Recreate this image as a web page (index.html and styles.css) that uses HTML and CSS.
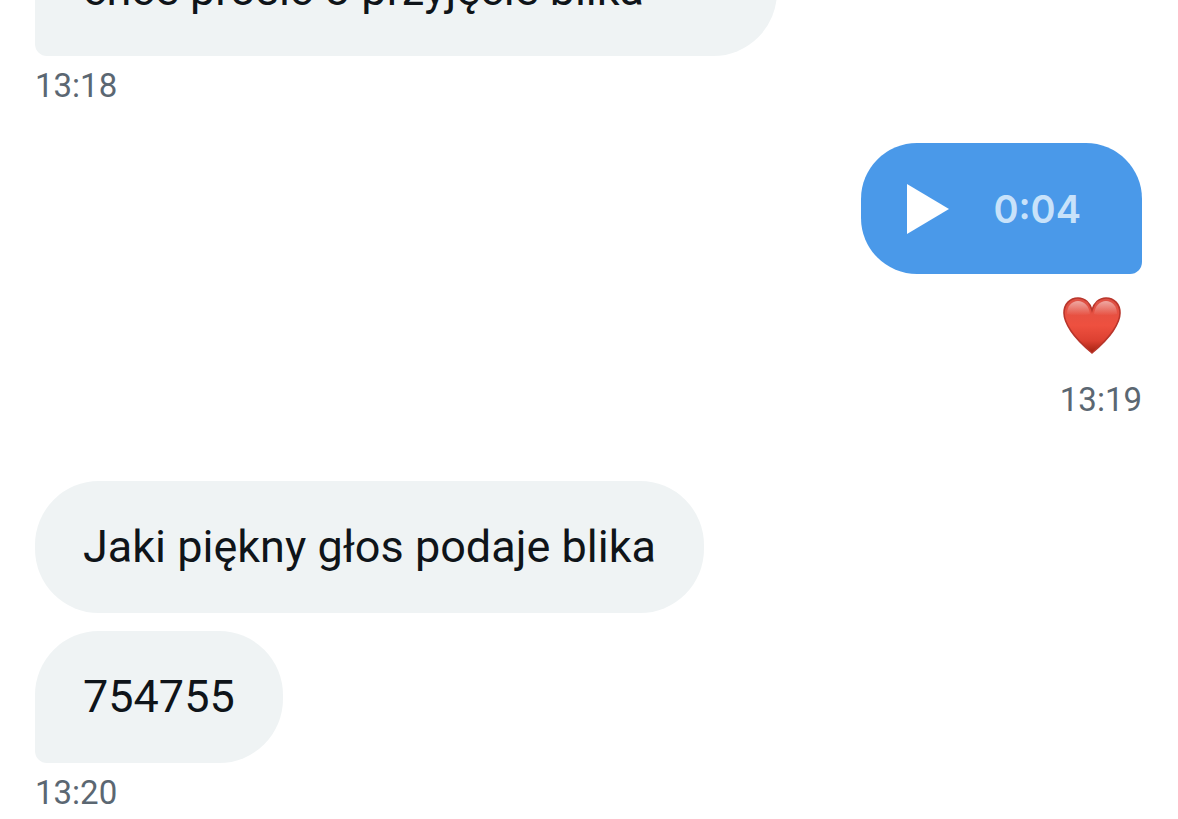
FILE: index.html
```html
<!DOCTYPE html>
<html lang="pl">
<head>
<meta charset="utf-8">
<meta name="viewport" content="width=device-width, initial-scale=1">
<title>Czat</title>
<link rel="stylesheet" href="styles.css">
</head>
<body>
<main class="thread">
  <section class="group">
    <p class="bubble bubble-wide bubble-last">chce prosić o przyjęcie blika</p>
    <time class="stamp">13:18</time>
  </section>
  <section class="group group-sent">
    <button class="voice" type="button">
      <svg class="play" viewBox="0 0 42 50" aria-hidden="true"><path d="M0 0L42 25L0 50Z"/></svg>
      <span class="duration">0:04</span>
    </button>
    <svg class="heart" viewBox="0 0 58 58" role="img" aria-label="serce">
      <defs>
        <linearGradient id="body" x1="0" y1="0" x2="0" y2="1">
          <stop offset="0" stop-color="#dd5145"/>
          <stop offset=".5" stop-color="#ee503f"/>
          <stop offset=".78" stop-color="#dc4031"/>
          <stop offset="1" stop-color="#a3200f"/>
        </linearGradient>
        <linearGradient id="shine" x1="0" y1="0" x2="0" y2="1">
          <stop offset="0" stop-color="#fff" stop-opacity=".5"/>
          <stop offset="1" stop-color="#fff" stop-opacity="0"/>
        </linearGradient>
      </defs>
      <path d="M29 56C22 50 14 43 8 34C4 28 1 23 1 16C1 7 7 1 15 1C22 1 27 6 29 13C31 6 36 1 43 1C51 1 57 7 57 16C57 23 54 28 50 34C44 43 36 50 29 56Z" fill="url(#body)" stroke="#b8352b" stroke-width="1.6"/>
      <path d="M4 17C4 9 9 4 15 4C21 4 26 9 27 17C21 19 11 19 4 17Z" fill="url(#shine)"/>
      <path d="M54 17C54 9 49 4 43 4C37 4 32 9 31 17C37 19 47 19 54 17Z" fill="url(#shine)"/>
    </svg>
    <time class="stamp">13:19</time>
  </section>
  <section class="group group-reply">
    <p class="bubble">Jaki piękny głos podaje blika</p>
    <p class="bubble bubble-last">754755</p>
    <time class="stamp">13:20</time>
  </section>
</main>
</body>
</html>
```
FILE: styles.css
```css
* {
  box-sizing: border-box;
}

body {
  margin: 0;
  background: #fff;
  color: #0f1419;
  font-family: Roboto, "Noto Sans", sans-serif;
}

/* The conversation stays scrolled to its newest message. */
.thread {
  display: flex;
  flex-direction: column;
  justify-content: flex-end;
  height: 100vh;
  padding: 0 36px 6px 35px;
  overflow: hidden;
}

.group {
  display: flex;
  flex: none;
  flex-direction: column;
  align-items: flex-start;
}

.group-sent {
  align-items: flex-end;
  margin-top: 37px;
}

.group-reply {
  margin-top: 61px;
}

.bubble {
  max-width: 67%;
  margin: 0;
  padding: 36px 48px;
  border-radius: 64px;
  background: #eff3f4;
  font-size: 45px;
  line-height: 60px;
}

.bubble + .bubble {
  margin-top: 18px;
}

.bubble-wide {
  width: 67%;
}

.bubble-last {
  border-bottom-left-radius: 12px;
}

.stamp {
  margin-top: 10px;
  color: #5b6772;
  font-size: 33px;
  line-height: 40px;
}

.voice {
  display: flex;
  align-items: center;
  gap: 44px;
  height: 131px;
  padding: 0 61px 0 46px;
  border: 0;
  border-radius: 56px 56px 12px 56px;
  background: #4a99e9;
  color: #c8e2fa;
  font: 600 38px Inter, sans-serif;
}

.play {
  width: 42px;
  height: 50px;
  fill: #fff;
}

.heart {
  width: 58px;
  height: 58px;
  margin: 23px 21px 15px 0;
}
```
